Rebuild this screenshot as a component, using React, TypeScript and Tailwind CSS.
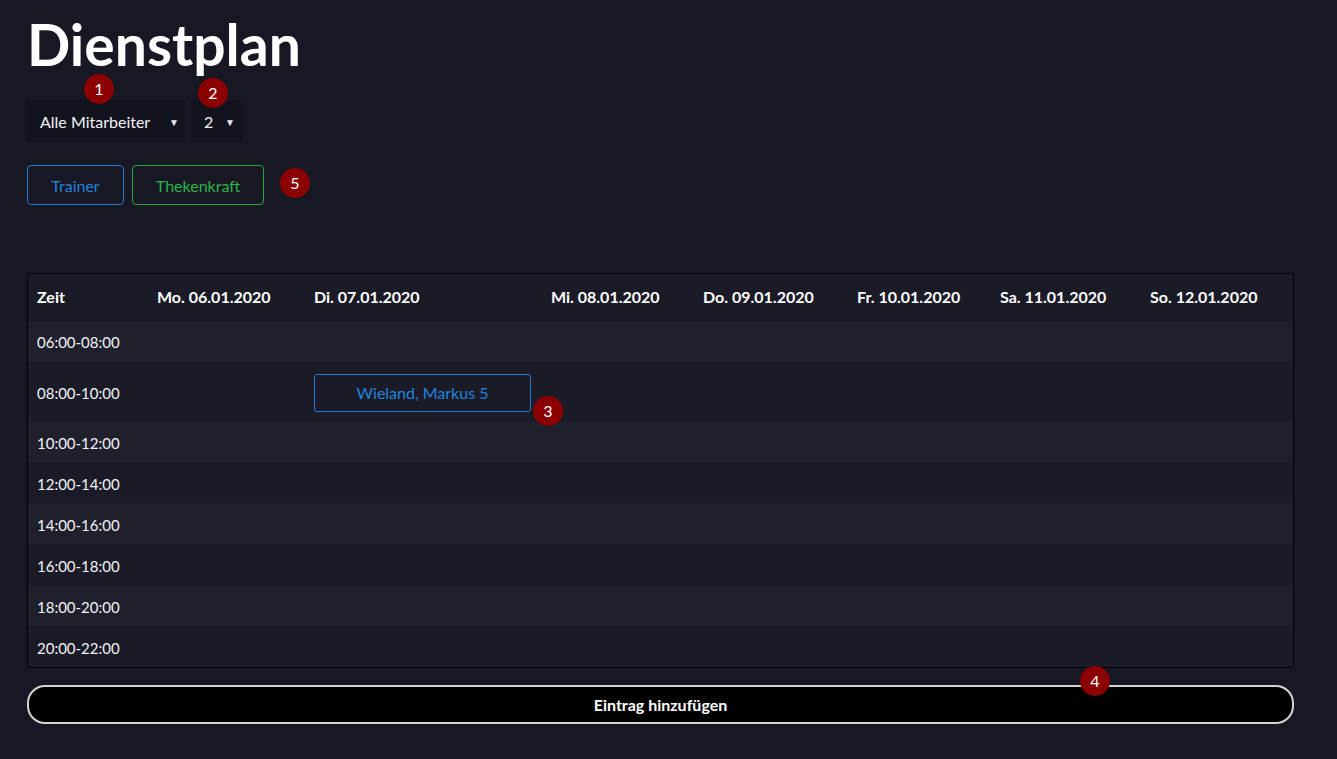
import React from "react";

const Badge = ({ n, className }: { n: string; className: string }) => (
  <div
    className={`absolute w-[30px] h-[30px] rounded-full bg-[#8b0000] text-white text-[16px] flex items-center justify-center leading-none ${className}`}
  >
    {n}
  </div>
);

const cols = [
  "Zeit",
  "Mo. 06.01.2020",
  "Di. 07.01.2020",
  "Mi. 08.01.2020",
  "Do. 09.01.2020",
  "Fr. 10.01.2020",
  "Sa. 11.01.2020",
  "So. 12.01.2020",
];

const times = [
  "06:00-08:00",
  "08:00-10:00",
  "10:00-12:00",
  "12:00-14:00",
  "14:00-16:00",
  "16:00-18:00",
  "18:00-20:00",
  "20:00-22:00",
];

const heights = ["h-[40px]", "h-[59px]", "h-[41px]", "h-[41px]", "h-[41px]", "h-[41px]", "h-[41px]", "h-[41px]"];

const grid = "grid grid-cols-[120px_157px_237px_152px_154px_143px_150px_154px]";

export default function App() {
  return (
    <div
      className="min-h-[759px] w-full bg-[#181824] text-[#f2f2f8] relative"
      style={{ fontFamily: "Lato, 'Noto Sans', sans-serif" }}
    >
      <div className="px-[27px] pt-[10px] w-[1321px]">
        <h1 className="text-[57px] font-bold leading-[68px] text-white">Dienstplan</h1>
        <div className="relative flex gap-[6px] mt-[22px]">
          <div className="w-[158px] h-[42px] bg-[#13131d] flex items-center justify-between pl-[13px] pr-[6px] pt-[2px] text-[16px]">
            <span>Alle Mitarbeiter</span>
            <span className="text-[10px] text-[#e8e8f5]">▼</span>
          </div>
          <div className="w-[52px] h-[42px] bg-[#13131d] flex items-center justify-between pl-[13px] pr-[8px] pt-[2px] text-[16px]">
            <span>2</span>
            <span className="text-[10px] text-[#e8e8f5]">▼</span>
          </div>
          <Badge n="1" className="left-[57px] top-[-26px]" />
          <Badge n="2" className="left-[171px] top-[-22px]" />
        </div>
        <div className="relative flex gap-[8px] mt-[23px]">
          <div className="w-[97px] h-[40px] border border-[#1f7ad0] rounded-[4px] flex items-center justify-center pt-[1px] text-[16px] text-[#2383de]">
            Trainer
          </div>
          <div className="w-[132px] h-[40px] border border-[#1fa93f] rounded-[4px] flex items-center justify-center pt-[1px] text-[16px] text-[#27b548]">
            Thekenkraft
          </div>
          <Badge n="5" className="left-[253px] top-[3px]" />
        </div>

        <div className="mt-[68px] w-[1267px] border border-black rounded-[2px] bg-[#1b1b27] overflow-hidden">
          <div className={`${grid} h-[48px] items-center pb-[2px] bg-[#1b1b27]`}>
            {cols.map((c) => (
              <div key={c} className="pl-[9px] font-bold text-[16px] text-white">
                {c}
              </div>
            ))}
          </div>
          {times.map((t, i) => (
            <div
              key={t}
              className={`${grid} items-center ${heights[i]} ${i === 1 ? "pt-[3px]" : i > 1 ? "pt-[3px]" : ""} ${
                i % 2 === 0 ? "bg-[#20202d]" : "bg-[#1b1b27]"
              }`}
            >
              <div className="pl-[9px] text-[15px]">{t}</div>
              <div />
              <div className="pl-[9px] relative">
                {i === 1 && (
                  <>
                    <div className="w-[217px] h-[38px] border border-[#1f7ad0] rounded-[3px] flex items-center justify-center text-[16px] text-[#2383de]">
                      Wieland, Markus 5
                    </div>
                    <Badge n="3" className="left-[228px] top-[22px]" />
                  </>
                )}
              </div>
              <div />
              <div />
              <div />
              <div />
              <div />
            </div>
          ))}
        </div>

        <div className="relative mt-[17px] w-[1267px]">
          <div className="h-[39px] bg-black border-2 border-[#d4d4d4] rounded-[18px] flex items-center justify-center font-bold text-[16px] text-white">
            Eintrag hinzufügen
          </div>
          <Badge n="4" className="left-[1053px] top-[-19px]" />
        </div>
      </div>
    </div>
  );
}
